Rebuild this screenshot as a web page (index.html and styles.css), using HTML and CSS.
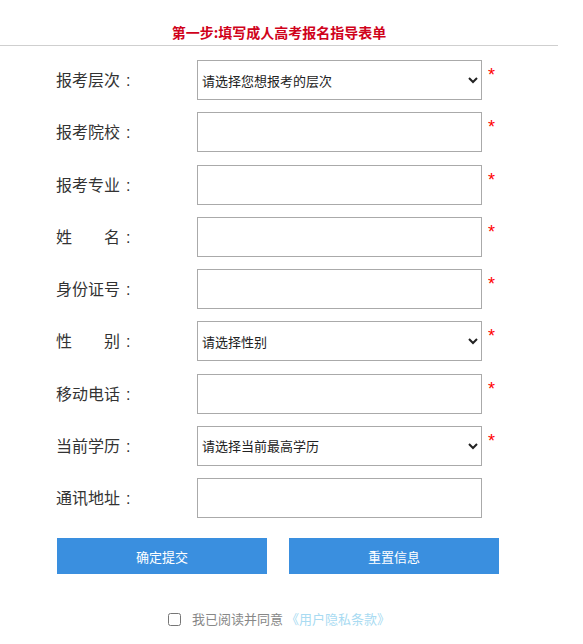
FILE: index.html
```html
<!DOCTYPE html>
<html lang="zh-CN">
<head>
<meta charset="utf-8">
<title>填写成人高考报名指导表单</title>
<link rel="stylesheet" href="styles.css">
</head>
<body>
<div class="page">
  <div class="header"><h1 class="title">第一步:填写成人高考报名指导表单</h1></div>
  <form class="form">
    <div class="row">
      <label class="label">报考层次<span class="colon">:</span></label>
      <select class="field select"><option>请选择您想报考的层次</option></select>
      <span class="star">*</span>
    </div>
    <div class="row">
      <label class="label">报考院校<span class="colon">:</span></label>
      <input class="field" type="text">
      <span class="star">*</span>
    </div>
    <div class="row">
      <label class="label">报考专业<span class="colon">:</span></label>
      <input class="field" type="text">
      <span class="star">*</span>
    </div>
    <div class="row">
      <label class="label">姓　　名<span class="colon">:</span></label>
      <input class="field" type="text">
      <span class="star">*</span>
    </div>
    <div class="row">
      <label class="label">身份证号<span class="colon">:</span></label>
      <input class="field" type="text">
      <span class="star">*</span>
    </div>
    <div class="row">
      <label class="label">性　　别<span class="colon">:</span></label>
      <select class="field select"><option>请选择性别</option></select>
      <span class="star">*</span>
    </div>
    <div class="row">
      <label class="label">移动电话<span class="colon">:</span></label>
      <input class="field" type="text">
      <span class="star">*</span>
    </div>
    <div class="row">
      <label class="label">当前学历<span class="colon">:</span></label>
      <select class="field select"><option>请选择当前最高学历</option></select>
      <span class="star">*</span>
    </div>
    <div class="row">
      <label class="label">通讯地址<span class="colon">:</span></label>
      <input class="field" type="text">
    </div>
    <div class="buttons">
      <button type="button" class="btn">确定提交</button>
      <button type="button" class="btn">重置信息</button>
    </div>
    <div class="agree">
      <input type="checkbox" class="check">
      <span class="agree-text">我已阅读并同意</span>
      <a class="agree-link" href="#">《用户隐私条款》</a>
    </div>
  </form>
</div>
</body>
</html>
```
FILE: styles.css
```css
* { box-sizing: border-box; }
body {
  margin: 0;
  font-family: "Noto Sans CJK SC", "Microsoft YaHei", sans-serif;
  color: #333;
  background: #fff;
}
.page {
  width: 558px;
}
.header {
  border-bottom: 1px solid #cfcfcf;
  padding-top: 22px;
  padding-bottom: 3px;
  text-align: center;
}
.title {
  margin: 0;
  font-size: 14px;
  line-height: 20px;
  font-weight: bold;
  color: #d0021b;
}
.form {
  padding-top: 14px;
  display: flex;
  flex-direction: column;
}
.row {
  display: flex;
  align-items: flex-start;
  padding-left: 56px;
  height: 40px;
  margin-bottom: 12.25px;
}
.label {
  width: 141px;
  font-size: 16px;
  line-height: 38px;
  color: #333;
}
.colon {
  display: inline-block;
  padding-left: 6px;
  font-family: "Liberation Sans", Arial, sans-serif;
}
.field {
  width: 285px;
  height: 40px;
  border: 1px solid #aaa;
  border-radius: 0;
  background: #fff;
  margin: 0;
  font-family: inherit;
  font-size: 13px;
  color: #222;
  outline: none;
}
.select {
  padding-left: 0;
}
.star {
  margin-left: 6px;
  color: #f00;
  font-family: "Liberation Sans", Arial, sans-serif;
  font-size: 18px;
  line-height: 18px;
  padding-top: 6px;
}
.buttons {
  display: flex;
  gap: 22px;
  padding-left: 57px;
  margin-top: 8px;
}
.btn {
  width: 210px;
  height: 36px;
  border: 0;
  border-radius: 0;
  background: #3a8fdf;
  color: #fff;
  font-family: inherit;
  font-size: 13px;
  padding: 0;
}
.agree {
  display: flex;
  justify-content: center;
  align-items: center;
  margin-top: 37px;
  font-size: 13px;
  line-height: 16px;
}
.check {
  width: 13px;
  height: 13px;
  margin: 0 11px 0 0;
}
.agree-text {
  color: #888;
}
.agree-link {
  color: #a9dbf2;
  text-decoration: none;
  margin-left: 3px;
}
```
